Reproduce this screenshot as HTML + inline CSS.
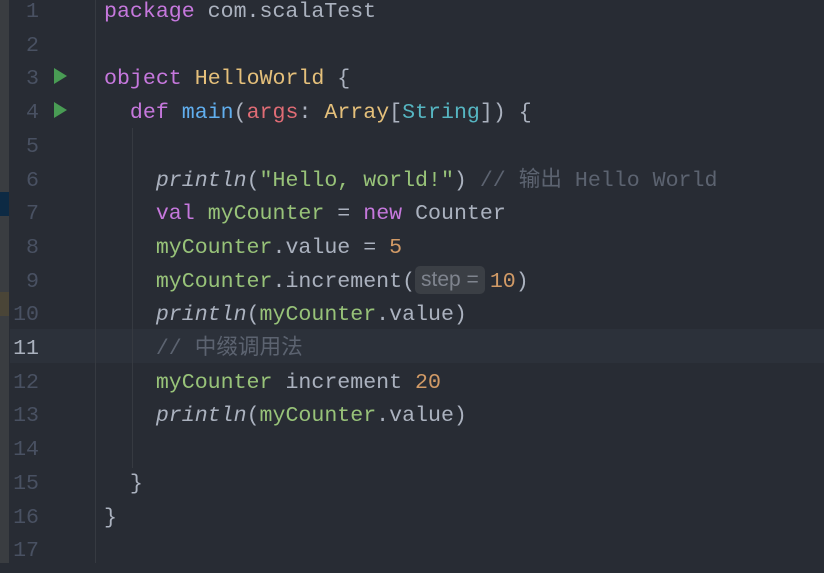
<!DOCTYPE html><html><head><style>
body{margin:0;width:824px;height:563px;overflow:hidden;background:#282c34;font-family:"Liberation Mono","Noto Sans CJK SC",monospace;font-size:21.6px;position:relative}
.strip{position:absolute;left:0;top:0;width:9px;height:563px;background:#3a3d41}
.l{position:absolute;left:0;width:824px;height:33.7px;line-height:33.7px;white-space:pre;color:#abb2bf}
.n{position:absolute;left:0;width:39px;text-align:right;color:#495162}
.c{position:absolute;left:104px}
.k{color:#c678dd}.y{color:#e5c07b}.b{color:#61afef}.r{color:#e06c75}.cy{color:#56b6c2}.g{color:#98c379}.i{font-style:italic}.cm{color:#5c6370}.o{color:#d19a66}
.hint{display:inline-block;line-height:28px;background:#3b3f45;color:#7f848e;border-radius:5px;padding:0 6px;margin-right:5px;font-family:"Liberation Sans",sans-serif;font-size:21px;vertical-align:1px}
.run{position:absolute;left:54px;width:0;height:0;border-left:13px solid #499c54;border-top:8px solid transparent;border-bottom:8px solid transparent}
.guide{position:absolute;width:1px;background:#363a41}
</style></head><body>
<div class="strip"></div>
<div style="position:absolute;left:0;top:192px;width:9px;height:24px;background:#0d2a44"></div>
<div style="position:absolute;left:0;top:292px;width:9px;height:24px;background:#4a4537"></div>
<div style="position:absolute;left:10px;top:329px;width:814px;height:33.7px;background:#2c313a"></div>
<div class="guide" style="left:95px;top:0;height:563px"></div>
<div class="guide" style="left:132px;top:128px;height:340px"></div>
<div class="run" style="top:68px"></div>
<div class="run" style="top:102px"></div>
<div style="position:absolute;left:0;top:3px;width:824px;height:570px">
<div class="l" style="top:-7px"><span class="n">1</span><span class="c"><span class="k">package</span> com.scalaTest</span></div>
<div class="l" style="top:26.7px"><span class="n">2</span></div>
<div class="l" style="top:60.4px"><span class="n">3</span><span class="c"><span class="k">object</span> <span class="y">HelloWorld</span> {</span></div>
<div class="l" style="top:94.1px"><span class="n">4</span><span class="c">  <span class="k">def</span> <span class="b">main</span>(<span class="r">args</span>: <span class="y">Array</span>[<span class="cy">String</span>]) {</span></div>
<div class="l" style="top:127.8px"><span class="n">5</span></div>
<div class="l" style="top:161.5px"><span class="n">6</span><span class="c">    <span class="i">println</span>(<span class="g">"Hello, world!"</span>) <span class="cm">// 输出 Hello World</span></span></div>
<div class="l" style="top:195.2px"><span class="n">7</span><span class="c">    <span class="k">val</span> <span class="g">myCounter</span> = <span class="k">new</span> Counter</span></div>
<div class="l" style="top:228.9px"><span class="n">8</span><span class="c">    <span class="g">myCounter</span>.value = <span class="o">5</span></span></div>
<div class="l" style="top:262.6px"><span class="n">9</span><span class="c">    <span class="g">myCounter</span>.increment(<span class="hint">step =</span><span class="o">10</span>)</span></div>
<div class="l" style="top:296.3px"><span class="n">10</span><span class="c">    <span class="i">println</span>(<span class="g">myCounter</span>.value)</span></div>
<div class="l" style="top:330px"><span class="n" style="color:#abb2bf">11</span><span class="c">    <span class="cm">// 中缀调用法</span></span></div>
<div class="l" style="top:363.7px"><span class="n">12</span><span class="c">    <span class="g">myCounter</span> increment <span class="o">20</span></span></div>
<div class="l" style="top:397.4px"><span class="n">13</span><span class="c">    <span class="i">println</span>(<span class="g">myCounter</span>.value)</span></div>
<div class="l" style="top:431.1px"><span class="n">14</span></div>
<div class="l" style="top:464.8px"><span class="n">15</span><span class="c">  }</span></div>
<div class="l" style="top:498.5px"><span class="n">16</span><span class="c">}</span></div>
<div class="l" style="top:532.2px"><span class="n">17</span></div>
</div>
</body></html>
